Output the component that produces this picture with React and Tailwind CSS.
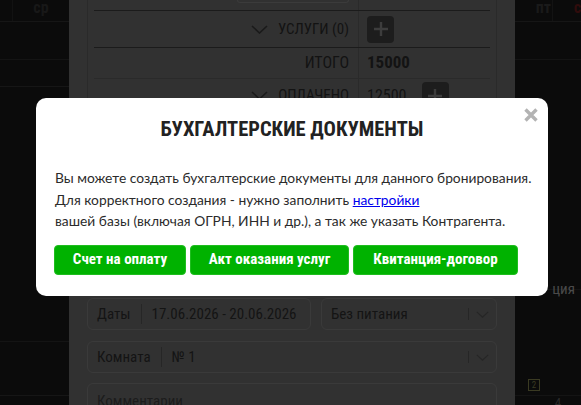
import React from "react";

// Стрелка для раскрывающихся строк и селектов
const Chevron = ({ className }) => (
  <svg viewBox="0 0 17 9" className={className} fill="none" stroke="currentColor" strokeWidth="1.6">
    <path d="M1 1l7.5 7L16 1" />
  </svg>
);

const PlusButton = () => (
  <div className="w-[27px] h-[27px] rounded-[4px] bg-[#1d1d1d] flex items-center justify-center">
    <svg viewBox="0 0 16 16" className="w-[16px] h-[16px]" stroke="#3d3d3d" strokeWidth="2.4">
      <path d="M8 1v14M1 8h14" />
    </svg>
  </div>
);

const Field = ({ label, value, select, className }) => (
  <div className={"h-[32px] shrink-0 border border-[#3a3a3a] rounded-[6px] flex items-center pl-[9px] pr-[7px] text-[15px] text-[#141414] whitespace-nowrap " + className}>
    {label && (
      <>
        <span>{label}</span>
        <span className="w-px h-[20px] bg-[#262626] mx-[10px]" />
      </>
    )}
    <span className="flex-1">{value}</span>
    {select && (
      <>
        <span className="w-px h-[12px] bg-[#262626] mr-[7px]" />
        <Chevron className="w-[13px] h-[7px] text-[#262626]" />
      </>
    )}
  </div>
);

const buttons = [
  { text: "Счет на оплату", w: "w-[132px]" },
  { text: "Акт оказания услуг", w: "w-[159px]" },
  { text: "Квитанция-договор", w: "w-[165px]" },
];

const Modal = () => (
  <div className="absolute left-[36px] top-[98px] w-[512px] h-[198px] bg-white rounded-[10px] pl-[18px] pr-[10px] pt-[18px]">
    <button className="absolute right-[10px] top-[10px]">
      <svg viewBox="0 0 14 14" className="w-[14px] h-[14px]" stroke="#b3b3b3" strokeWidth="3.4">
        <path d="M1.5 1.5l11 11M12.5 1.5l-11 11" />
      </svg>
    </button>
    <h2 className="text-center font-['Roboto_Condensed',sans-serif] font-bold text-[20.5px] leading-[26px] text-[#222] pr-[8px]">
      БУХГАЛТЕРСКИЕ ДОКУМЕНТЫ
    </h2>
    <p className="mt-[25px] font-['Lato',sans-serif] text-[13.8px] leading-[21.5px] text-[#2b2b2b] pl-[1px] whitespace-nowrap">
      Вы можете создать бухгалтерские документы для данного бронирования.
      <br />
      Для корректного создания - нужно заполнить <a href="#" className="text-[#0000ee] underline">настройки</a>
      <br />
      вашей базы (включая ОГРН, ИНН и др.), а так же указать Контрагента.
    </p>
    <div className="mt-[13px] flex gap-[4px]">
      {buttons.map((b) => (
        <button
          key={b.text}
          className={b.w + " h-[30px] rounded-[4px] bg-[#00b200] border border-[#1fbd1f] text-white font-['Roboto_Condensed',sans-serif] font-bold text-[15px] whitespace-nowrap"}
        >
          {b.text}
        </button>
      ))}
    </div>
  </div>
);

export default function App() {
  return (
    <div className="relative w-[581px] h-[405px] overflow-hidden bg-[#0b0b0b] font-['Roboto_Condensed',sans-serif]">
      <div className="flex h-full">
        {/* календарь слева */}
        <div className="w-[69px] flex flex-col">
          <div className="h-[22px] shrink-0 border-b border-[#161616] flex">
            <div className="w-[13px] border-r border-[#121212]" />
            <div className="flex-1 text-center font-bold text-[16px] leading-[16px] text-[#181818]">ср</div>
          </div>
          <div className="h-[38px] shrink-0 border-b border-[#141414]" />
          <div className="h-[27px] shrink-0 border-b border-[#161616]" />
          <div className="h-[255px] shrink-0 border-b border-[#141414]" />
          <div className="h-[54px] shrink-0 border-b border-[#161616]" />
        </div>

        {/* панель бронирования (под затемнением) */}
        <div className="w-[446px] bg-[#313131] px-[18px] flex flex-col">
          <div className="h-[288px] shrink-0 border-x border-[#2a2a2a] px-[6px] text-[15px] text-[#131313]">
            <div className="h-[11px] border-b border-[#1b1b1b] flex">
              <div className="w-[265px] border-r border-[#2a2a2a] flex justify-end pr-[9px]">
                <div className="w-[112px] h-[3px] border-x border-b border-[#3b3b3b] rounded-b-[4px]" />
              </div>
            </div>
            <div className="h-[37px] border-b border-[#1b1b1b] flex">
              <div className="w-[265px] border-r border-[#2a2a2a] flex items-center justify-end gap-[10px] pr-[9px]">
                <Chevron className="w-[17px] h-[9px] text-[#1a1a1a]" />
                <span>УСЛУГИ (0)</span>
              </div>
              <div className="flex items-center pl-[8px]">
                <PlusButton />
              </div>
            </div>
            <div className="h-[31px] border-b border-[#2a2a2a] flex">
              <div className="w-[265px] border-r border-[#2a2a2a] flex items-center justify-end pr-[9px] text-[16px]">ИТОГО</div>
              <div className="flex items-center pl-[8px] font-bold text-[17px]">15000</div>
            </div>
            <div className="h-[34px] border-b border-[#2a2a2a] flex">
              <div className="w-[265px] border-r border-[#2a2a2a] flex items-center justify-end gap-[10px] pr-[9px]">
                <Chevron className="w-[17px] h-[9px] text-[#1a1a1a]" />
                <span>ОПЛАЧЕНО</span>
              </div>
              <div className="flex items-center pl-[8px] gap-[15px] text-[16px]">
                <span>12500</span>
                <PlusButton />
              </div>
            </div>
            <div className="h-[31px] border-b border-[#2a2a2a] flex">
              <div className="w-[265px] border-r border-[#2a2a2a] flex items-center justify-end pr-[9px]">ОСТАЛОСЬ</div>
              <div className="flex items-center pl-[8px]">2500</div>
            </div>
          </div>

          <div className="mt-[10px] shrink-0 flex gap-[10px]">
            <Field label="Даты" value="17.06.2026 - 20.06.2026" className="w-[224px]" />
            <Field value="Без питания" select className="flex-1" />
          </div>
          <Field label="Комната" value="№ 1" select className="mt-[11px]" />
          <div className="mt-[10px] h-[40px] shrink-0 border border-[#3a3a3a] rounded-[6px] pl-[9px] pt-[6px] text-[15px] text-[#1c1c1c]">
            Комментарии
          </div>
        </div>

        {/* календарь справа */}
        <div className="flex-1 flex flex-col">
          <div className="h-[22px] shrink-0 border-b border-[#161616] flex text-[16px] font-bold leading-[16px]">
            <div className="w-[38px] border-r border-[#131313] flex justify-end pr-[1px] text-[#1a1a1a]">пт</div>
            <div className="flex-1 flex justify-end text-[#300c0c]">с</div>
          </div>
          <div className="h-[38px] shrink-0 border-b border-[#141414]" />
          <div className="h-[230px] shrink-0 border-b border-[#141414] flex items-end justify-end pr-[6px] text-[15px] leading-[16px] text-[#4a4a4a]">
            <span className="-mb-[8px]">ция</span>
          </div>
          <div className="h-[106px] shrink-0 border-b border-[#141414] flex items-end pl-[13px] pb-[4px]">
            <span className="w-[12px] h-[12px] border border-[#3a3a22] text-[9px] leading-[10px] text-center text-[#3a3a22]">2</span>
          </div>
          <div className="flex-1 flex justify-center pl-[20px] text-[13px] leading-[14px] text-[#2a2a2a]">4</div>
        </div>
      </div>

      <Modal />
    </div>
  );
}
